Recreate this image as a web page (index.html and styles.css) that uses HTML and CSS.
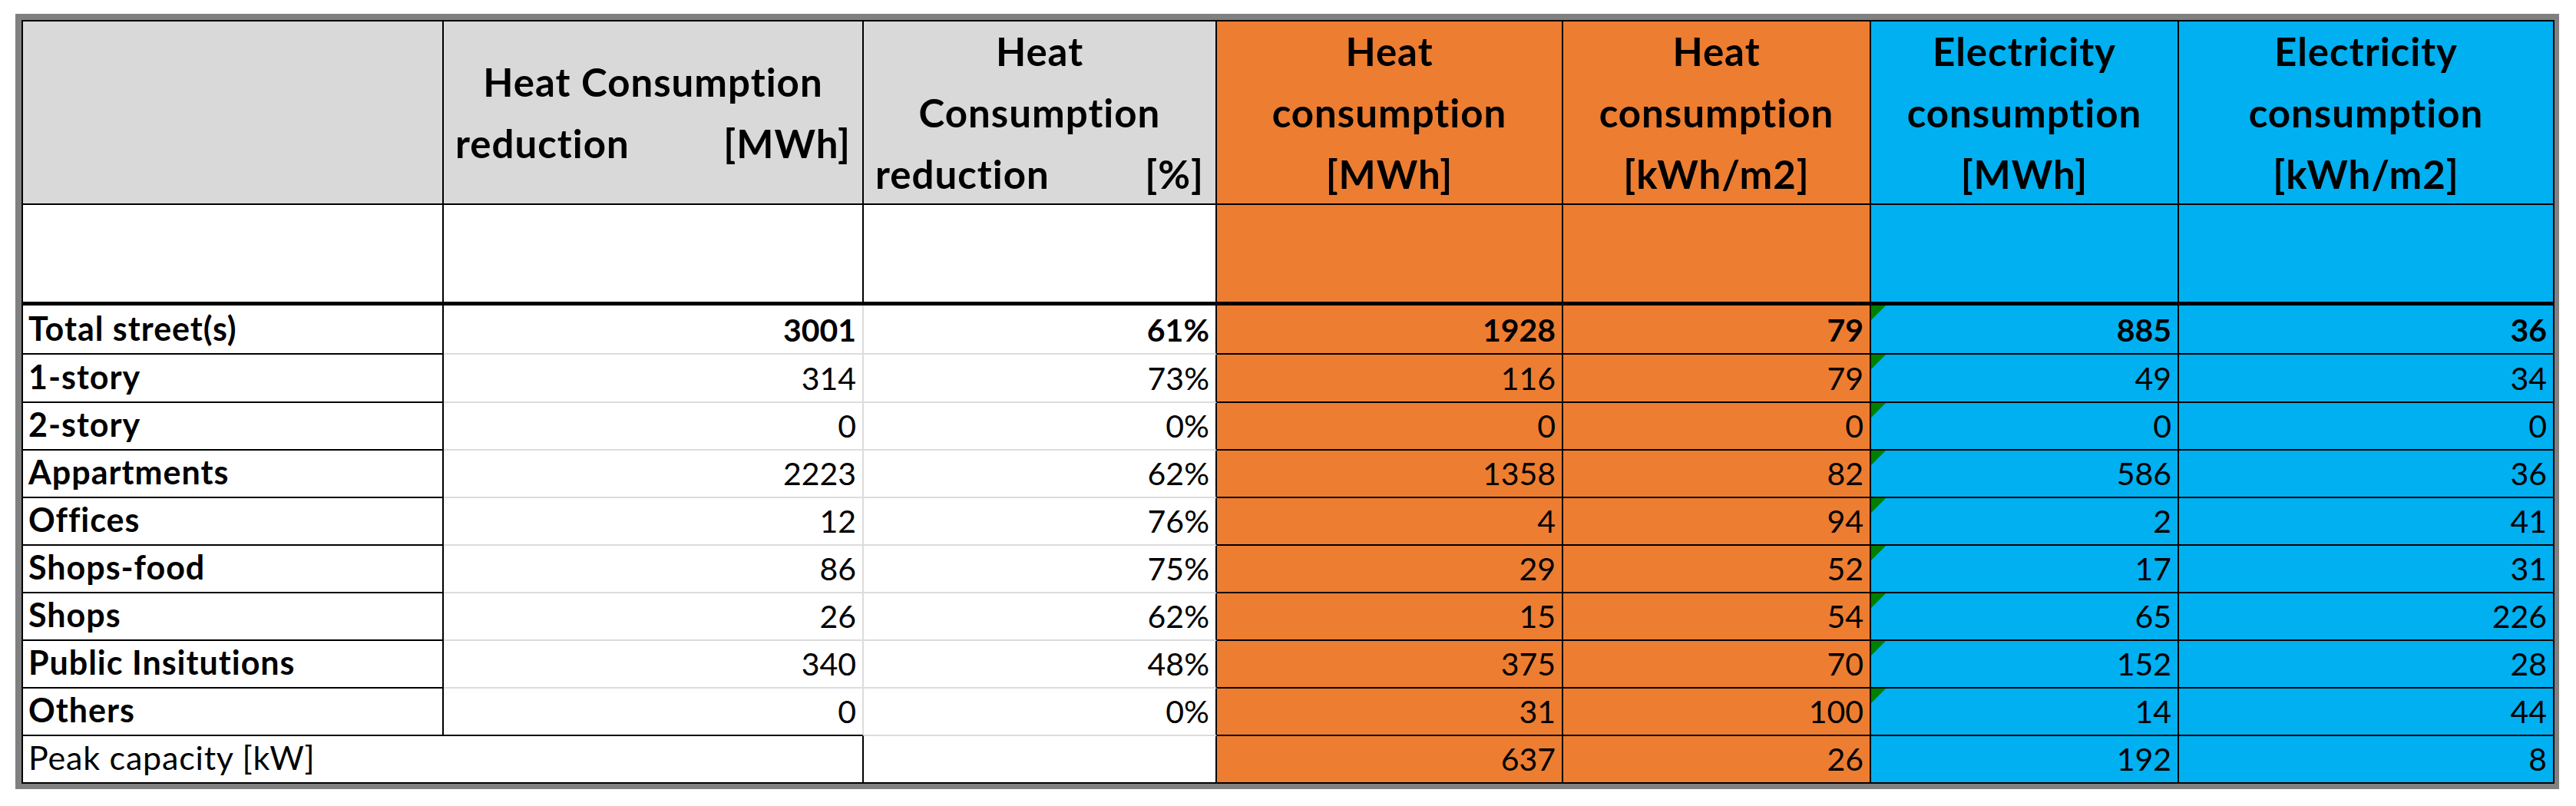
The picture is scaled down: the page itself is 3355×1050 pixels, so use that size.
FILE: index.html
```html
<!DOCTYPE html>
<html>
<head>
<meta charset="utf-8">
<title>Consumption table</title>
<link rel="stylesheet" href="styles.css">
</head>
<body>
<div class="frame">
  <div class="sheet">
    <!-- header row -->
    <div class="c hd gh"></div>
    <div class="c hd gh">
      <div class="ln">Heat Consumption</div>
      <div class="ln spread"><span>reduction</span><span>[MWh]</span></div>
    </div>
    <div class="c hd gh">
      <div class="ln">Heat</div>
      <div class="ln">Consumption</div>
      <div class="ln spread"><span>reduction</span><span>[%]</span></div>
    </div>
    <div class="c hd or">
      <div class="ln">Heat</div>
      <div class="ln">consumption</div>
      <div class="ln">[MWh]</div>
    </div>
    <div class="c hd or">
      <div class="ln">Heat</div>
      <div class="ln">consumption</div>
      <div class="ln">[kWh/m2]</div>
    </div>
    <div class="c hd bl">
      <div class="ln">Electricity</div>
      <div class="ln">consumption</div>
      <div class="ln">[MWh]</div>
    </div>
    <div class="c hd bl">
      <div class="ln">Electricity</div>
      <div class="ln">consumption</div>
      <div class="ln">[kWh/m2]</div>
    </div>

    <!-- blank row -->
    <div class="c blank"></div>
    <div class="c blank"></div>
    <div class="c blank"></div>
    <div class="c blank or"></div>
    <div class="c blank or"></div>
    <div class="c blank bl"></div>
    <div class="c blank bl"></div>

    <!-- Total -->
    <div class="c lab">Total street(s)</div>
    <div class="c num w wr b">3001</div>
    <div class="c num w b">61%</div>
    <div class="c num or b">1928</div>
    <div class="c num or b">79</div>
    <div class="c num bl b tri">885</div>
    <div class="c num bl b">36</div>

    <div class="c lab">1-story</div>
    <div class="c num w wr">314</div>
    <div class="c num w">73%</div>
    <div class="c num or">116</div>
    <div class="c num or">79</div>
    <div class="c num bl tri">49</div>
    <div class="c num bl">34</div>

    <div class="c lab">2-story</div>
    <div class="c num w wr">0</div>
    <div class="c num w">0%</div>
    <div class="c num or">0</div>
    <div class="c num or">0</div>
    <div class="c num bl tri">0</div>
    <div class="c num bl">0</div>

    <div class="c lab">Appartments</div>
    <div class="c num w wr">2223</div>
    <div class="c num w">62%</div>
    <div class="c num or">1358</div>
    <div class="c num or">82</div>
    <div class="c num bl tri">586</div>
    <div class="c num bl">36</div>

    <div class="c lab">Offices</div>
    <div class="c num w wr">12</div>
    <div class="c num w">76%</div>
    <div class="c num or">4</div>
    <div class="c num or">94</div>
    <div class="c num bl tri">2</div>
    <div class="c num bl">41</div>

    <div class="c lab">Shops-food</div>
    <div class="c num w wr">86</div>
    <div class="c num w">75%</div>
    <div class="c num or">29</div>
    <div class="c num or">52</div>
    <div class="c num bl tri">17</div>
    <div class="c num bl">31</div>

    <div class="c lab">Shops</div>
    <div class="c num w wr">26</div>
    <div class="c num w">62%</div>
    <div class="c num or">15</div>
    <div class="c num or">54</div>
    <div class="c num bl tri">65</div>
    <div class="c num bl">226</div>

    <div class="c lab">Public Insitutions</div>
    <div class="c num w wr">340</div>
    <div class="c num w">48%</div>
    <div class="c num or">375</div>
    <div class="c num or">70</div>
    <div class="c num bl tri">152</div>
    <div class="c num bl">28</div>

    <div class="c lab">Others</div>
    <div class="c num w wr last">0</div>
    <div class="c num w">0%</div>
    <div class="c num or">31</div>
    <div class="c num or">100</div>
    <div class="c num bl tri">14</div>
    <div class="c num bl">44</div>

    <!-- Peak -->
    <div class="c peak">Peak capacity [kW]</div>
    <div class="c"></div>
    <div class="c num or">637</div>
    <div class="c num or">26</div>
    <div class="c num bl">192</div>
    <div class="c num bl">8</div>
  </div>
</div>
</body>
</html>
```
FILE: styles.css
```css
html, body {
  margin: 0;
  padding: 0;
  background: #ffffff;
}

.frame {
  display: inline-block;
  margin: 18px 0 0 20px;
  border-style: solid;
  border-color: #808080;
  border-width: 8px 6px 7px 8px;
}

.sheet {
  display: grid;
  grid-template-columns: 548px 547px 460px 451px 401px 401px 489px;
  grid-template-rows: 239px 131px 64px 63px repeat(8, 62px);
  border-left: 2px solid #000;
  border-top: 2px solid #000;
  font-family: Lato, "Open Sans", "DejaVu Sans", sans-serif;
  color: #000;
}

.c {
  box-sizing: border-box;
  position: relative;
  border-right: 2px solid #000;
  border-bottom: 2px solid #000;
  display: flex;
  align-items: flex-end;
  padding: 0 8px 6px 7px;
  font-size: 41px;
  line-height: 1.2;
  white-space: nowrap;
  background: #ffffff;
}

.gh { background: #d9d9d9; }
.or { background: #ed7d31; }
.bl { background: #00b0f0; }

.hd {
  flex-direction: column;
  justify-content: center;
  align-items: center;
  padding: 0 15px;
  font-size: 51px;
  letter-spacing: 1px;
  font-weight: bold;
}

.ln {
  line-height: 80px;
  text-align: center;
}

.spread {
  align-self: stretch;
  display: flex;
  justify-content: space-between;
}

.blank {
  border-bottom-width: 5px;
}

.lab {
  font-weight: bold;
  font-size: 43px;
  letter-spacing: 1px;
  justify-content: flex-start;
}

.num {
  justify-content: flex-end;
}

.b { font-weight: bold; }

.w { border-bottom-color: #dcdcdc; }
.wr { border-right-color: #dcdcdc; }
.w.last { border-bottom-color: #000; }

.peak {
  grid-column: span 2;
  justify-content: flex-start;
  font-weight: normal;
  font-size: 43px;
  letter-spacing: 0.8px;
}

.tri::before {
  content: "";
  position: absolute;
  left: 0;
  top: 0;
  width: 0;
  height: 0;
  border-top: 19px solid #008000;
  border-right: 19px solid transparent;
}
```
